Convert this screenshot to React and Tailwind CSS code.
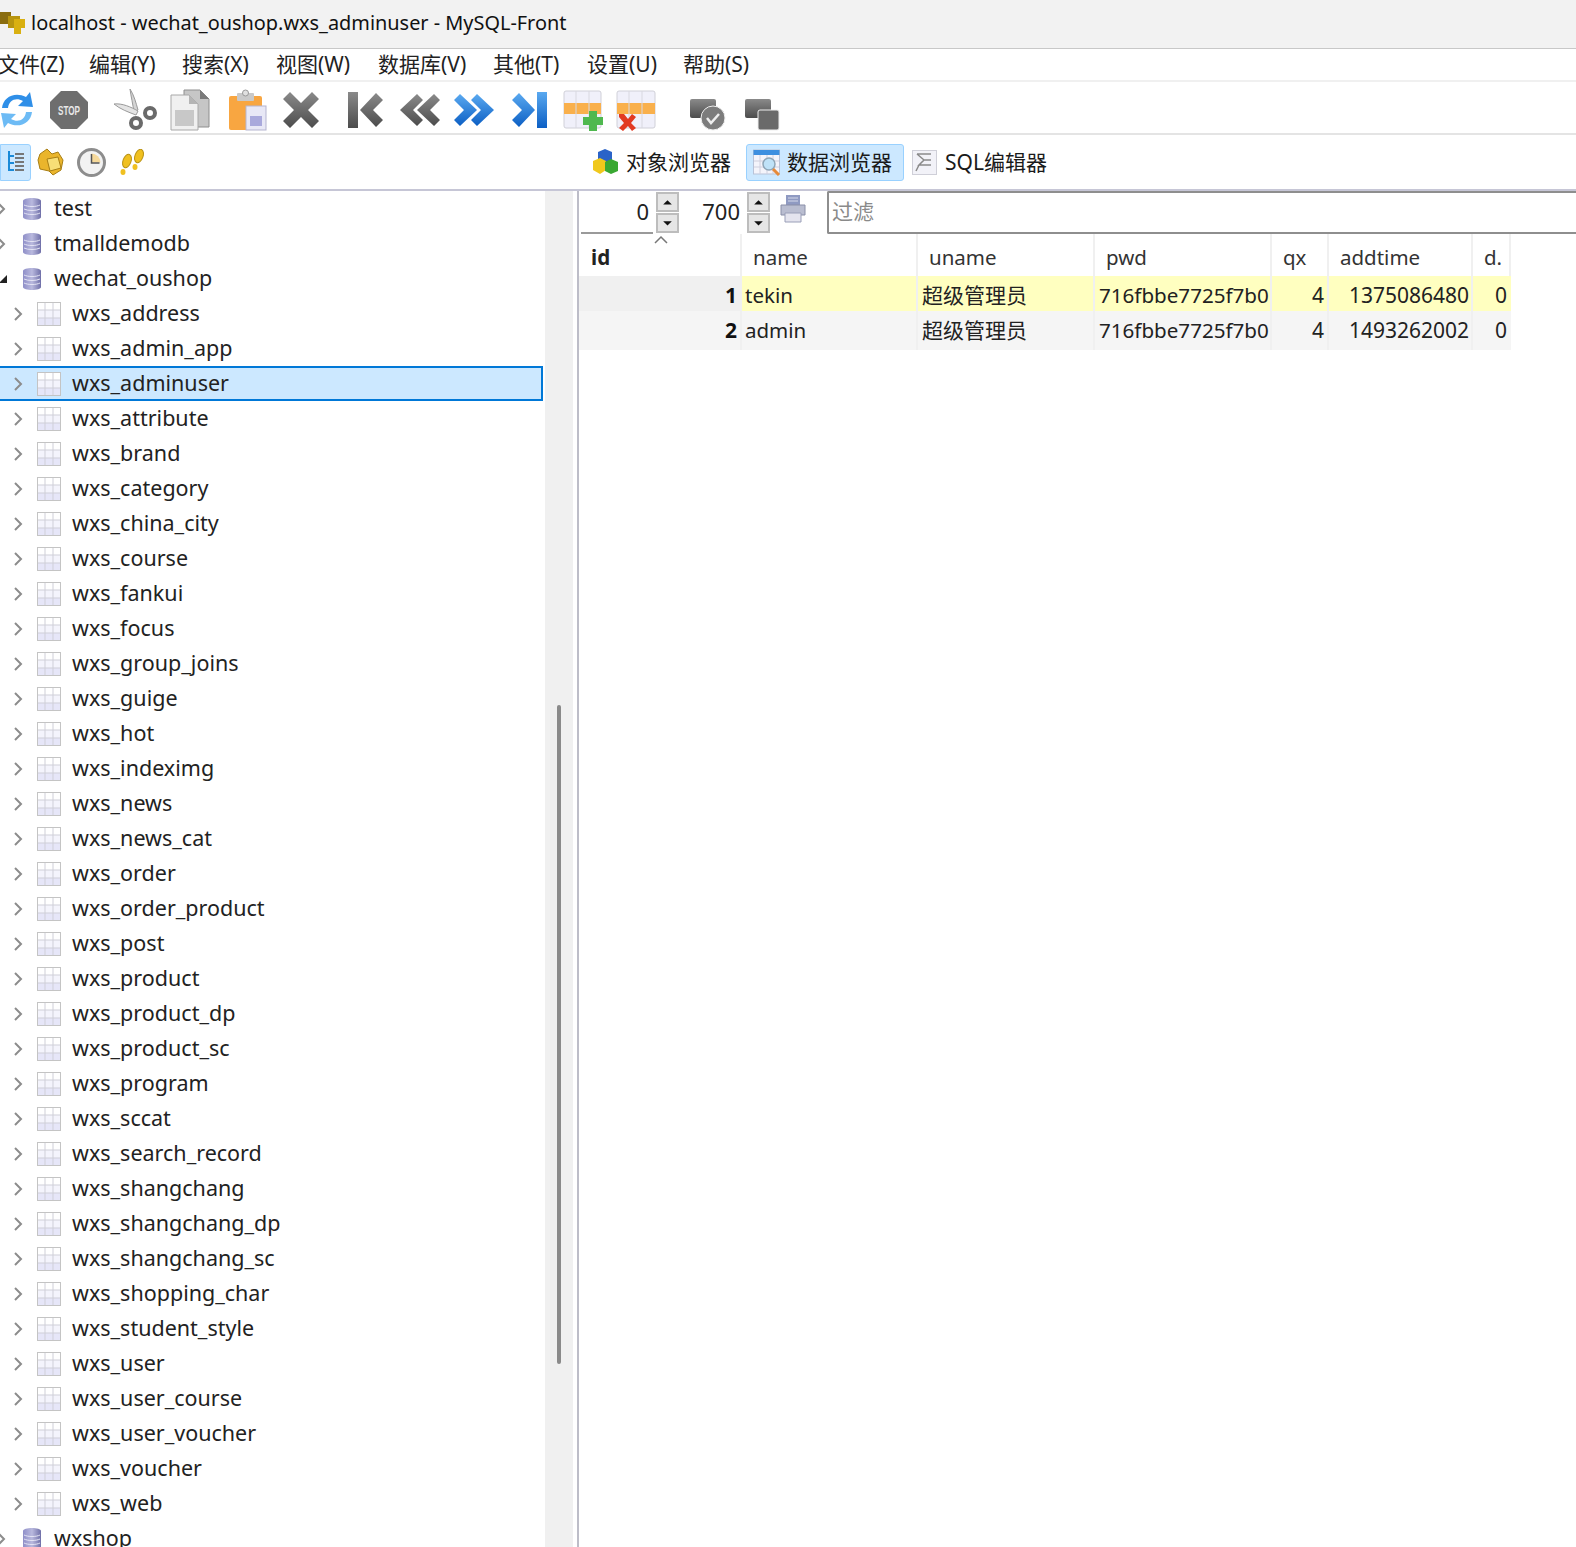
const FONT = "font-['Noto_Sans','Noto_Sans_CJK_SC',sans-serif]";

const TABLES = [
  'wxs_address', 'wxs_admin_app', 'wxs_adminuser', 'wxs_attribute', 'wxs_brand', 'wxs_category', 'wxs_china_city',
  'wxs_course', 'wxs_fankui', 'wxs_focus', 'wxs_group_joins', 'wxs_guige', 'wxs_hot', 'wxs_indeximg', 'wxs_news',
  'wxs_news_cat', 'wxs_order', 'wxs_order_product', 'wxs_post', 'wxs_product', 'wxs_product_dp', 'wxs_product_sc',
  'wxs_program', 'wxs_sccat', 'wxs_search_record', 'wxs_shangchang', 'wxs_shangchang_dp', 'wxs_shangchang_sc',
  'wxs_shopping_char', 'wxs_student_style', 'wxs_user', 'wxs_user_course', 'wxs_user_voucher', 'wxs_voucher', 'wxs_web',
];

const MENUS = [
  ['文件(Z)', 'w-[91px]'], ['编辑(Y)', 'w-[93px]'], ['搜索(X)', 'w-[94px]'], ['视图(W)', 'w-[102px]'],
  ['数据库(V)', 'w-[115px]'], ['其他(T)', 'w-[94px]'], ['设置(U)', 'w-[96px]'], ['帮助(S)', 'w-[80px]'],
];

const ROWS = [
  { id: 1, name: 'tekin', addtime: '1375086480', bg: 'bg-[#ffffc0]', idBg: 'bg-[#f0f0f0]' },
  { id: 2, name: 'admin', addtime: '1493262002', bg: 'bg-[#f5f5f5]', idBg: 'bg-[#f5f5f5]' },
];

function Defs() {
  return (
    <svg width="0" height="0" className="absolute">
      <defs>
        <linearGradient id="blue" x1="0" y1="0" x2="0" y2="1"><stop offset="0" stopColor="#5aa9f0" /><stop offset="1" stopColor="#0c5fc4" /></linearGradient>
        <linearGradient id="gray" x1="0" y1="0" x2="0" y2="1"><stop offset="0" stopColor="#8a8a8a" /><stop offset="1" stopColor="#4c4c4c" /></linearGradient>
        <linearGradient id="db" x1="0" y1="0" x2="1" y2="0"><stop offset="0" stopColor="#8f8fc8" /><stop offset="0.5" stopColor="#b9b9de" /><stop offset="1" stopColor="#6f6fa8" /></linearGradient>
      </defs>
    </svg>
  );
}

function Chevron({ className = '' }) {
  return (
    <svg width="10" height="14" viewBox="0 0 10 14" className={className} fill="none" stroke="#8c8c8c" strokeWidth="2">
      <path d="M2 1l6 6-6 6" />
    </svg>
  );
}

function DbIcon() {
  return (
    <svg width="18" height="22" viewBox="0 0 18 22" className="shrink-0">
      <path d="M0 3c0-4 18-4 18 0v16c0 4-18 4-18 0z" fill="url(#db)" />
      <path d="M1 7c4 2 12 2 16 0M1 11c4 2 12 2 16 0M1 15c4 2 12 2 16 0" stroke="#e4e4f4" strokeWidth="1" fill="none" />
    </svg>
  );
}

function TableIcon() {
  return (
    <svg width="24" height="24" viewBox="0 0 24 24" className="shrink-0">
      <rect x="0.5" y="0.5" width="23" height="23" fill="#fff" stroke="#c4c4c4" />
      <rect x="1" y="16" width="22" height="7" fill="#e6e6f8" />
      <rect x="1" y="8" width="22" height="8" fill="#f4f4fc" />
      <path d="M8 1v22M16 1v22M1 8h22M1 16h22" stroke="#cfcfd8" strokeWidth="1" />
    </svg>
  );
}

function Spin({ className = '' }) {
  return (
    <div className={`flex flex-col gap-[1px] w-[23px] shrink-0 ${className}`}>
      {['M6 9l5-5 5 5z', 'M6 4l5 5 5-5z'].map(d => (
        <div key={d} className="h-[20px] bg-[#e6e6e6] border-2 border-[#bdbdbd] flex items-center justify-center">
          <svg width="22" height="12" viewBox="0 0 22 12"><path d={d} fill="#111" /></svg>
        </div>
      ))}
    </div>
  );
}

function TreeRow({ label, selected, children }) {
  return (
    <div className={`flex items-center h-[35px] w-[545px] shrink-0 ${selected ? 'bg-[#cce8ff] border-2 border-[#0078d7] -ml-[2px]' : ''}`}>
      {children}
      <span className="whitespace-nowrap -mt-[1px]">{label}</span>
    </div>
  );
}

function Toolbar() {
  return (
    <div className="h-[53px] flex items-center shrink-0 border-b-2 border-[#e4e4e4] pt-[5px]">
      {/* refresh */}
      <svg width="36" height="40" viewBox="0 0 36 40" className="shrink-0 -ml-[1px]">
        <path d="M3 18C4 7 16 1 27 7l4-5 3 15-15-1 5-5c-7-4-14-1-15 7z" fill="#2f8fe8" />
        <path d="M33 22c-1 11-13 17-24 11l-4 5-3-15 15 1-5 5c7 4 14 1 15-7z" fill="#6dbbf5" />
      </svg>
      {/* stop */}
      <svg width="40" height="40" viewBox="0 0 40 40" className="ml-[14px] shrink-0">
        <path d="M12 1h16l11 11v16L28 39H12L1 28V12z" fill="#6e6e6e" />
        <text x="20" y="25" textAnchor="middle" fill="#e8e8e8" fontSize="13" fontWeight="700" fontFamily="Liberation Sans" textLength="22" lengthAdjust="spacingAndGlyphs">STOP</text>
      </svg>
      {/* scissors */}
      <svg width="44" height="42" viewBox="0 0 44 42" className="ml-[24px] shrink-0">
        <path d="M17 0c4 6 6 14 8 21l-4 3C20 15 18 8 17 0z" fill="#d4d4d4" stroke="#9a9a9a" />
        <path d="M1 15c8-1 17 3 24 7l-2 4C15 23 7 20 1 15z" fill="#e4e4e4" stroke="#9a9a9a" />
        <circle cx="23" cy="34" r="5" fill="none" stroke="#6a6a6a" strokeWidth="4" />
        <circle cx="37" cy="24" r="5" fill="none" stroke="#6a6a6a" strokeWidth="4" />
      </svg>
      {/* copy */}
      <svg width="40" height="42" viewBox="0 0 40 42" className="ml-[13px] shrink-0">
        <path d="M14 1h16l9 9v28H14z" fill="#c6c6c6" stroke="#8e8e8e" />
        <path d="M30 1v9h9z" fill="#7a7a7a" />
        <path d="M1 6h18l9 9v26H1z" fill="#f0f0f0" stroke="#a8a8a8" />
        <path d="M19 6v9h9z" fill="#b5b5b5" />
        <rect x="5" y="21" width="19" height="16" fill="#c8c8c8" />
      </svg>
      {/* paste */}
      <svg width="39" height="42" viewBox="0 0 39 42" className="ml-[18px] shrink-0">
        <rect x="1" y="7" width="33" height="34" rx="2" fill="#f8a641" />
        <rect x="9" y="4" width="17" height="8" rx="1" fill="#c9c9c9" />
        <circle cx="17.5" cy="4" r="3" fill="#e0e0e0" stroke="#999" />
        <rect x="18" y="17" width="20" height="24" fill="#e8e8f6" stroke="#b5b5d0" />
        <rect x="22" y="27" width="12" height="10" fill="#a9a9dc" />
      </svg>
      {/* delete */}
      <svg width="38" height="38" viewBox="0 0 38 38" className="ml-[15px] shrink-0">
        <path d="M8 1l11 11L30 1l7 7-11 11 11 11-7 7-11-11L8 37l-7-7 11-11L1 8z" fill="url(#gray)" />
      </svg>
      {/* first */}
      <svg width="35" height="38" viewBox="0 0 35 38" className="ml-[28px] shrink-0">
        <rect x="0" y="1" width="10" height="36" fill="url(#gray)" />
        <path d="M12 19L28 2l7 7-10 10 10 10-7 7z" fill="url(#gray)" />
      </svg>
      {/* prev */}
      <svg width="40" height="38" viewBox="0 0 40 38" className="ml-[17px] shrink-0">
        <path d="M0 19L17 3l6 6-10 10 10 10-6 6zM17 19L34 3l6 6-10 10 10 10-6 6z" fill="url(#gray)" />
      </svg>
      {/* next */}
      <svg width="40" height="38" viewBox="0 0 40 38" className="ml-[14px] shrink-0">
        <path d="M23 19L6 3 0 9l10 10L0 29l6 6zM40 19L23 3l-6 6 10 10-10 10 6 6z" fill="url(#blue)" />
      </svg>
      {/* last */}
      <svg width="35" height="38" viewBox="0 0 35 38" className="ml-[18px] shrink-0">
        <path d="M23 19L7 2 0 9l10 10L0 29l7 7z" fill="url(#blue)" />
        <rect x="25" y="1" width="10" height="36" fill="url(#blue)" />
      </svg>
      {/* add row */}
      <svg width="41" height="41" viewBox="0 0 41 41" className="ml-[16px] shrink-0">
        <rect x="1" y="1" width="37" height="37" rx="2" fill="#f0f0fa" stroke="#d0d0d8" />
        <rect x="1" y="13" width="37" height="11" fill="#f9b04c" />
        <path d="M13 1v37M26 1v37" stroke="#d8d8e0" />
        <path d="M26 21h8v6h6v8h-6v6h-8v-6h-6v-8h6z" fill="#4fb84f" />
      </svg>
      {/* delete row */}
      <svg width="40" height="41" viewBox="0 0 40 41" className="ml-[12px] shrink-0">
        <rect x="1" y="1" width="38" height="37" rx="2" fill="#f0f0fa" stroke="#d0d0d8" />
        <rect x="1" y="13" width="38" height="11" fill="#f9b04c" />
        <path d="M13 1v37M26 1v37" stroke="#d8d8e0" />
        <path d="M3 24l5 0 4 5 4-5 4 3-5 6 5 5-4 3-4-5-5 5-4-3 5-5-5-6z" fill="#e23a22" />
      </svg>
      {/* apply */}
      <svg width="36" height="32" viewBox="0 0 36 32" className="ml-[34px] mt-[9px] shrink-0">
        <rect x="0" y="0" width="26" height="19" rx="2" fill="url(#gray)" />
        <circle cx="23" cy="19" r="12" fill="#7c7c7c" stroke="#eee" />
        <path d="M17 19l4 5 8-9" fill="none" stroke="#eee" strokeWidth="2.5" />
      </svg>
      {/* cancel */}
      <svg width="35" height="32" viewBox="0 0 35 32" className="ml-[19px] mt-[9px] shrink-0">
        <rect x="0" y="0" width="26" height="19" rx="2" fill="url(#gray)" />
        <rect x="13" y="11" width="21" height="20" rx="2" fill="#6a6a6a" stroke="#eee" />
      </svg>
    </div>
  );
}

function ViewBar() {
  return (
    <div className="h-[54px] flex items-center shrink-0">
      <div className="w-[31px] h-[37px] bg-[#cce8ff] border border-[#99d1ff] rounded-r-[3px] flex items-center justify-center shrink-0">
        <svg width="20" height="24" viewBox="0 0 20 24" fill="none">
          <path d="M3 1v20M3 6h5M3 13h5M3 20h5" stroke="#1a8ad8" strokeWidth="2" />
          <path d="M9 4h9M9 8h9M9 12h9M9 16h9M9 20h9" stroke="#777" strokeWidth="2" />
        </svg>
      </div>
      {/* favorites folder */}
      <svg width="27" height="28" viewBox="0 0 27 28" className="ml-[6px] shrink-0">
        <path d="M3 6l7-5 5 5 6-2 5 8-2 10-8 5-4-4-9-2-2-9z" fill="#eab52c" stroke="#a87e14" />
        <path d="M10 11l11-2 3 11-11 3z" fill="#f8de76" stroke="#a87e14" />
      </svg>
      {/* history clock */}
      <svg width="29" height="29" viewBox="0 0 29 29" className="ml-[13px] shrink-0">
        <circle cx="14.5" cy="14.5" r="13" fill="#f2f2f2" stroke="#8d8d8d" strokeWidth="3" />
        <path d="M14.5 14.5h9a9 9 0 0 0-9-9z" fill="#f6d99a" />
        <path d="M14.5 6v9h8" fill="none" stroke="#555" strokeWidth="1.5" />
      </svg>
      {/* footsteps */}
      <svg width="26" height="26" viewBox="0 0 26 26" className="ml-[13px] shrink-0">
        <ellipse cx="20" cy="7" rx="4" ry="7" transform="rotate(20 20 7)" fill="#f0c020" stroke="#b89010" />
        <ellipse cx="16" cy="18" rx="2.5" ry="3" fill="#f0c020" />
        <ellipse cx="8" cy="12" rx="4" ry="7" transform="rotate(20 8 12)" fill="#f0c020" stroke="#b89010" />
        <ellipse cx="4" cy="23" rx="2.5" ry="3" fill="#f0c020" />
      </svg>

      <svg width="26" height="26" viewBox="0 0 26 26" className="ml-[447px] shrink-0">
        <path d="M13 0l7 3v8l-7 3-7-3V3z" fill="#2b63c8" />
        <path d="M1 12l7-3 6 3v9l-6 4-7-4z" fill="#f0c81c" />
        <path d="M13 13l6-3 7 3v9l-7 3-6-3z" fill="#39a832" />
      </svg>
      <span className="ml-[8px] w-[120px] shrink-0 text-[21px] leading-none text-[#1a1a1a]">对象浏览器</span>
      <div className="w-[158px] h-[37px] bg-[#cce8ff] border border-[#99d1ff] rounded-[3px] flex items-center pl-[6px] shrink-0">
        <svg width="28" height="27" viewBox="0 0 28 27" className="shrink-0">
          <rect x="0.5" y="1" width="26" height="24" fill="#f4f4fb" stroke="#b9c3d8" />
          <rect x="0.5" y="1" width="26" height="5" fill="#3d8fe0" />
          <path d="M7 6v19M14 6v19M20 6v19M1 12h25M1 18h25" stroke="#d0d0de" />
          <circle cx="16" cy="15" r="6" fill="#bfe2f8" stroke="#8fa6b8" strokeWidth="1.5" />
          <path d="M20 20l6 6" stroke="#e68a3a" strokeWidth="3" />
        </svg>
        <span className="ml-[6px] text-[21px] leading-none text-[#1a1a1a]">数据浏览器</span>
      </div>
      <svg width="25" height="25" viewBox="0 0 25 25" className="ml-[8px] shrink-0">
        <rect x="0.5" y="0.5" width="24" height="24" fill="#f2f2f8" stroke="#cfcfd8" />
        <path d="M5 4h14M5 4l7 6-5 5h12M12 10h7M7 15l-3 6" fill="none" stroke="#8a8a8a" strokeWidth="1.5" />
      </svg>
      <span className="ml-[8px] text-[21px] leading-none text-[#1a1a1a] whitespace-nowrap">SQL编辑器</span>
    </div>
  );
}

function FilterBar() {
  return (
    <div className="h-[43px] flex items-stretch shrink-0">
      <div className="w-[72px] ml-[2px] bg-white border-b-2 border-[#9a9a9a] text-right pr-[4px] text-[22px] leading-[40px] text-[#222] shrink-0">0</div>
      <Spin className="ml-[3px] mt-[1px]" />
      <div className="w-[59px] ml-[2px] text-right text-[22px] leading-[40px] text-[#222] shrink-0">700</div>
      <Spin className="ml-[7px] mt-[1px]" />
      {/* export */}
      <svg width="26" height="30" viewBox="0 0 26 30" className="ml-[10px] mt-[3px] shrink-0">
        <path d="M6 1h14v10H6z" fill="#8f9ac2" />
        <path d="M8 4h10M8 7h10" stroke="#d5d9ea" />
        <path d="M1 11h24v10H1z" fill="#b9bdd0" stroke="#8a8fa8" />
        <path d="M5 19h16v9H5z" fill="#e4e4ee" stroke="#9a9fb8" />
      </svg>
      <div className="flex-1 ml-[21px] bg-white border-l-2 border-y-2 border-[#8e8e8e] rounded-l-[2px] pl-[3px] text-[21px] leading-[37px] text-[#8a8a8a]">过滤</div>
    </div>
  );
}

function DataGrid() {
  const cols = 'grid-cols-[163px_176px_177px_177px_57px_144px_38px]';
  const headers = [
    ['id', 'pl-[12px] font-bold text-[#222]'], ['name', 'pl-[11px]'], ['uname', 'pl-[11px]'], ['pwd', 'pl-[11px]'],
    ['qx', 'pl-[11px]'], ['addtime', 'pl-[11px]'], ['d.', 'pl-[11px]'],
  ];
  return (
    <div className="relative w-[932px]">
      <svg width="16" height="9" viewBox="0 0 16 9" className="absolute left-[74px] top-[1px]" fill="none" stroke="#777" strokeWidth="1.5">
        <path d="M2 8l6-6 6 6" />
      </svg>
      <div className={`grid ${cols} h-[42px] items-center text-[20.5px] text-[#333]`}>
        {headers.map(([h, c]) => (
          <div key={h} className={`h-full flex items-center pt-[5px] border-r-2 border-[#f0f0f0] ${c}`}>{h}</div>
        ))}
      </div>
      {ROWS.map(r => (
        <div key={r.id} className={`grid ${cols} h-[34.5px] border-b border-[#f0f0f0] text-[21px] leading-[39px] text-[#222]`}>
          <div className={`${r.idBg} text-right pr-[3px] font-bold text-[#111] border-r-2 border-[#f0f0f0]`}>{r.id}</div>
          <div className={`${r.bg} pl-[3px] text-[20.5px] border-r-2 border-[#f0f0f0]`}>{r.name}</div>
          <div className={`${r.bg} pl-[4px] border-r-2 border-[#f0f0f0]`}>超级管理员</div>
          <div className={`${r.bg} pl-[4px] text-[20.6px] overflow-hidden whitespace-nowrap border-r-2 border-[#f0f0f0]`}>716fbbe7725f7b0</div>
          <div className={`${r.bg} text-right pr-[3px] border-r-2 border-[#f0f0f0]`}>4</div>
          <div className={`${r.bg} text-right pr-[2px] border-r-2 border-[#f0f0f0]`}>{r.addtime}</div>
          <div className={`${r.bg} text-right pr-[4px]`}>0</div>
        </div>
      ))}
    </div>
  );
}

export default function App() {
  return (
    <div className={`w-[1576px] h-[1547px] bg-white overflow-hidden flex flex-col text-[21.5px] text-[#222] ${FONT}`}>
      <Defs />
      {/* Title bar */}
      <div className="h-[49px] bg-[#f2f2f2] border-b border-[#c8c8c8] flex items-center shrink-0 pb-[3px]">
        <svg width="26" height="26" viewBox="0 0 26 26" className="shrink-0">
          <path d="M0 2h11v12H0z" fill="#8a6d10" />
          <path d="M8 6h12v12H8z" fill="#b8950f" />
          <path d="M14 9h11v9h-4v6h-7z" fill="#d9b011" />
        </svg>
        <span className="ml-[5px] text-[19.9px] text-[#111] whitespace-nowrap">localhost - wechat_oushop.wxs_adminuser - MySQL-Front</span>
      </div>
      {/* Menu */}
      <div className="h-[31px] -ml-[2px] flex items-center shrink-0 text-[21px] leading-none text-[#222] border-b-2 border-[#f0f0f0] box-content">
        {MENUS.map(([m, w]) => <span key={m} className={`${w} shrink-0 whitespace-nowrap`}>{m}</span>)}
      </div>
      <Toolbar />
      <ViewBar />
      <div className="h-[2px] bg-[#c6c6d6] shrink-0" />

      <div className="flex-1 flex min-h-0">
        {/* Tree */}
        <div className="w-[545px] shrink-0 flex flex-col overflow-hidden">
          <TreeRow label="test"><Chevron className="-ml-[4px] mr-[17px]" /><span className="mr-[13px]"><DbIcon /></span></TreeRow>
          <TreeRow label="tmalldemodb"><Chevron className="-ml-[4px] mr-[17px]" /><span className="mr-[13px]"><DbIcon /></span></TreeRow>
          <TreeRow label="wechat_oushop">
            <svg width="10" height="10" viewBox="0 0 10 10" className="-ml-[2px] mr-[15px]"><path d="M9 1v8H1z" fill="#222" /></svg>
            <span className="mr-[13px]"><DbIcon /></span>
          </TreeRow>
          {TABLES.map(t => (
            <TreeRow key={t} label={t} selected={t === 'wxs_adminuser'}>
              <Chevron className="ml-[13px] mr-[14px]" />
              <span className="mr-[11px]"><TableIcon /></span>
            </TreeRow>
          ))}
          <TreeRow label="wxshop"><Chevron className="-ml-[4px] mr-[17px]" /><span className="mr-[13px]"><DbIcon /></span></TreeRow>
        </div>
        {/* Tree scrollbar */}
        <div className="w-[28px] shrink-0 bg-[#f0f0f0] flex justify-center pt-[514px] pb-[182px]">
          <div className="w-[4px] h-[659px] bg-[#8a8a8a] rounded-full" />
        </div>
        {/* Data panel */}
        <div className="flex-1 ml-[4px] border-l-2 border-[#bdbdc8] flex flex-col min-w-0">
          <FilterBar />
          <DataGrid />
        </div>
      </div>
    </div>
  );
}
